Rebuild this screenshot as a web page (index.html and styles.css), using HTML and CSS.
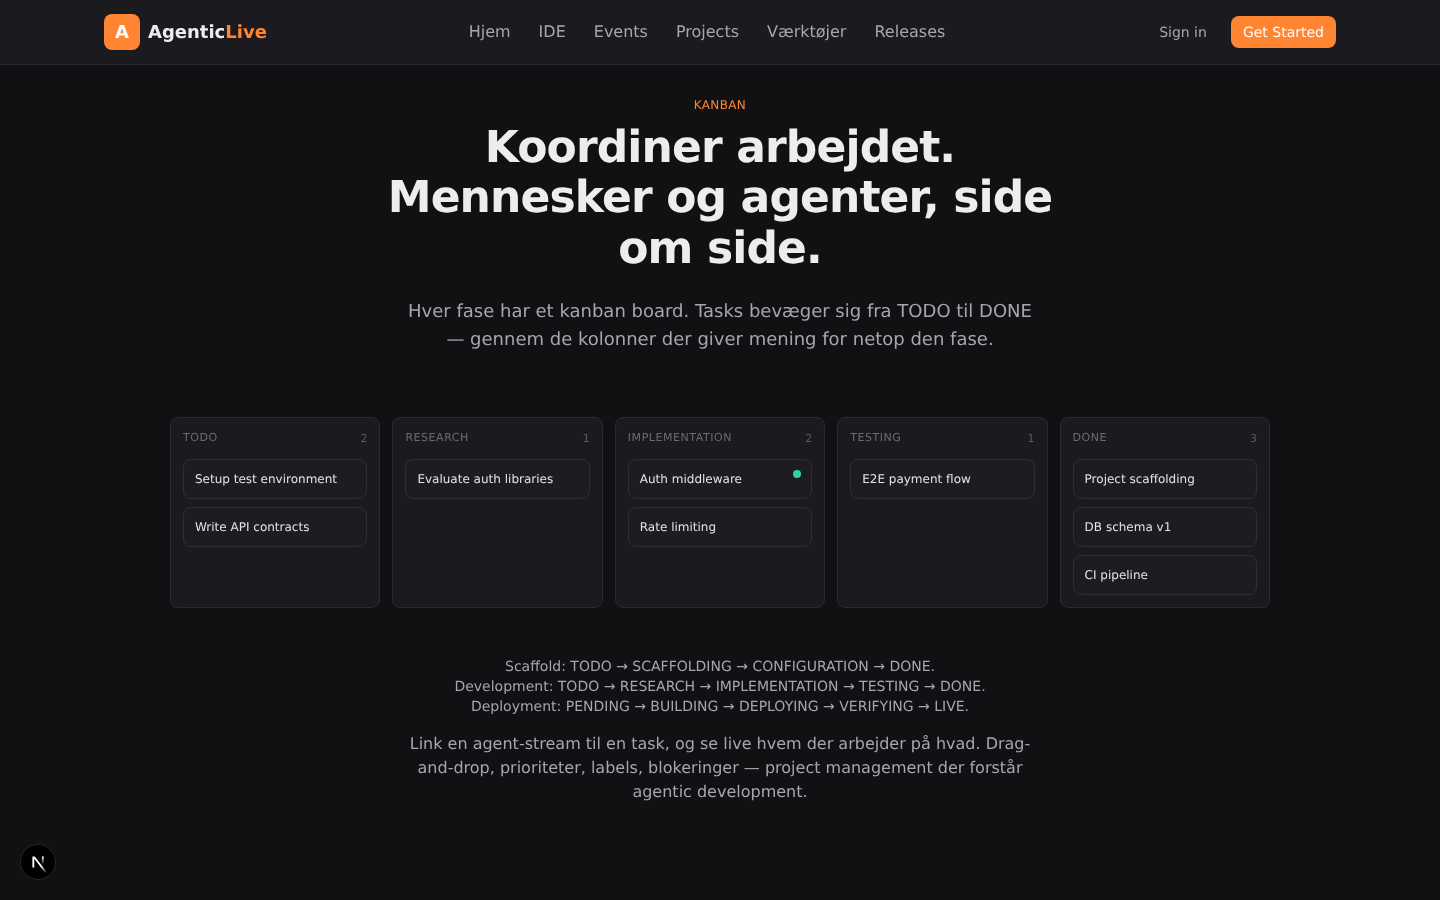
FILE: index.html
```html
<!DOCTYPE html>
<html lang="en">
<head>
    <meta charset="UTF-8">
    <meta name="viewport" content="width=device-width, initial-scale=1.0">
    <title>AgenticLive</title>
    <link rel="stylesheet" href="styles.css">
</head>
<body>
    <header class="nav">
        <div class="nav-inner">
            <a class="logo" href="#">
                <span class="logo-mark">A</span>
                <span class="logo-text">Agentic<span class="accent">Live</span></span>
            </a>
            <nav class="nav-links">
                <a href="#">Hjem</a>
                <a href="#">IDE</a>
                <a href="#">Events</a>
                <a href="#">Projects</a>
                <a href="#">Værktøjer</a>
                <a href="#">Releases</a>
            </nav>
            <div class="nav-actions">
                <a class="sign-in" href="#">Sign in</a>
                <a class="get-started" href="#">Get Started</a>
            </div>
        </div>
    </header>

    <main class="section">
        <p class="eyebrow">KANBAN</p>
        <h1>Koordiner arbejdet. Mennesker og agenter, side om side.</h1>
        <p class="lead">Hver fase har et kanban board. Tasks bevæger sig fra TODO til DONE — gennem de kolonner der giver mening for netop den fase.</p>

        <div class="board">
            <div class="column">
                <div class="column-head"><span>TODO</span><span class="count">2</span></div>
                <div class="card">Setup test environment</div>
                <div class="card">Write API contracts</div>
            </div>
            <div class="column">
                <div class="column-head"><span>RESEARCH</span><span class="count">1</span></div>
                <div class="card">Evaluate auth libraries</div>
            </div>
            <div class="column">
                <div class="column-head"><span>IMPLEMENTATION</span><span class="count">2</span></div>
                <div class="card">Auth middleware<span class="live-dot"></span></div>
                <div class="card">Rate limiting</div>
            </div>
            <div class="column">
                <div class="column-head"><span>TESTING</span><span class="count">1</span></div>
                <div class="card">E2E payment flow</div>
            </div>
            <div class="column">
                <div class="column-head"><span>DONE</span><span class="count">3</span></div>
                <div class="card">Project scaffolding</div>
                <div class="card">DB schema v1</div>
                <div class="card">CI pipeline</div>
            </div>
        </div>

        <p class="flows">Scaffold: TODO → SCAFFOLDING → CONFIGURATION → DONE.<br>Development: TODO → RESEARCH → IMPLEMENTATION → TESTING → DONE.<br>Deployment: PENDING → BUILDING → DEPLOYING → VERIFYING → LIVE.</p>
        <p class="outro">Link en agent-stream til en task, og se live hvem der arbejder på hvad. Drag-and-drop, prioriteter, labels, blokeringer — project management der forstår agentic development.</p>
    </main>

    <button class="dev-badge" type="button" aria-label="Next.js dev tools">
        <svg width="28" height="28" viewBox="0 0 180 180" fill="none">
            <defs>
                <linearGradient id="n-diag" gradientUnits="userSpaceOnUse" x1="109" y1="116.5" x2="144.5" y2="160.5">
                    <stop stop-color="#fff"/>
                    <stop offset="1" stop-color="#fff" stop-opacity="0"/>
                </linearGradient>
                <linearGradient id="n-bar" gradientUnits="userSpaceOnUse" x1="121" y1="54" x2="120.8" y2="106.9">
                    <stop stop-color="#fff"/>
                    <stop offset="1" stop-color="#fff" stop-opacity="0"/>
                </linearGradient>
            </defs>
            <path d="M149.5 157.5L69.1 54H54V126H66.1V69.4L140 164.8C143.3 162.6 146.5 160.2 149.5 157.5Z" fill="url(#n-diag)"/>
            <rect x="115" y="54" width="12" height="72" fill="url(#n-bar)"/>
        </svg>
    </button>
</body>
</html>
```

FILE: styles.css
```css
* {
    box-sizing: border-box;
}

body {
    margin: 0;
    min-height: 100vh;
    background-color: #111113;
    color: #ededef;
    font-family: "DejaVu Sans", sans-serif;
    text-rendering: geometricPrecision;
}

a {
    color: inherit;
    text-decoration: none;
}

.nav {
    height: 65px;
    background-color: #1a1a1f;
    border-bottom: 1px solid #2a2a30;
    will-change: transform;
}

.nav-inner {
    max-width: 1280px;
    height: 64px;
    margin: 0 auto;
    padding: 0 24px;
    display: flex;
    align-items: center;
    justify-content: space-between;
}

.logo {
    display: flex;
    align-items: center;
    gap: 8px;
}

.logo-mark {
    width: 36px;
    height: 36px;
    display: flex;
    align-items: center;
    justify-content: center;
    border-radius: 8px;
    background-color: #ff8533;
    color: #fff;
    font-size: 18px;
    font-weight: bold;
}

.logo-text {
    font-size: 18px;
    font-weight: bold;
}

.accent {
    color: #ff8533;
}

.nav-links {
    display: flex;
    gap: 28px;
    margin: 0 12px 2px 0;
    font-size: 16px;
    color: #a6a6ad;
}

.nav-actions {
    display: flex;
    align-items: center;
    gap: 24px;
    font-size: 14px;
}

.sign-in {
    padding-top: 1px;
    color: #a6a6ad;
}

.get-started {
    padding: 0 12px;
    height: 32px;
    line-height: 34px;
    border-radius: 8px;
    background-color: #ff8533;
    color: #fff;
}

.section {
    padding-top: 32px;
    display: flex;
    flex-direction: column;
    align-items: center;
    will-change: transform;
}

.eyebrow {
    margin: 0;
    font-size: 12px;
    line-height: 16px;
    letter-spacing: 0.36px;
    color: #ff8533;
}

h1 {
    width: 700px;
    margin: 9.5px 0 0;
    font-size: 44px;
    line-height: 50.6px;
    letter-spacing: -0.02em;
    font-weight: bold;
    text-align: center;
}

.lead {
    width: 640px;
    margin: 23.5px 0 0;
    font-size: 18px;
    line-height: 28px;
    color: #a6a6ad;
    text-align: center;
}

.board {
    width: 1100px;
    margin-top: 63px;
    display: grid;
    grid-template-columns: repeat(5, 1fr);
    gap: 12px;
}

.column {
    height: 191px;
    padding: 12px;
    display: flex;
    flex-direction: column;
    gap: 8px;
    background-color: #1a1a1f;
    border: 1px solid #2a2a30;
    border-radius: 8px;
}

.column-head {
    height: 21px;
    display: flex;
    justify-content: space-between;
    font-size: 11px;
    line-height: 16px;
    letter-spacing: 0.55px;
    color: #6b6b70;
}

.count {
    padding-top: 1px;
    font-size: 11px;
    letter-spacing: 0;
    color: #5a5a60;
}

.card {
    position: relative;
    height: 40px;
    padding: 0 11px;
    display: flex;
    align-items: center;
    font-size: 12px;
    color: #e4e4e7;
    background-color: #1c1c21;
    border: 1px solid #2e2e33;
    border-radius: 8px;
}

.live-dot {
    position: absolute;
    top: 10px;
    right: 10px;
    width: 8px;
    height: 8px;
    border-radius: 50%;
    background-color: #2dd4a0;
}

.flows {
    margin: 49px 0 0;
    font-size: 14px;
    line-height: 20px;
    color: #a6a6ad;
    text-align: center;
}

.outro {
    width: 640px;
    margin: 15px 0 0;
    font-size: 16px;
    line-height: 24px;
    color: #a6a6ad;
    text-align: center;
}

.dev-badge {
    position: fixed;
    left: 20px;
    bottom: 20px;
    width: 36px;
    height: 36px;
    padding: 0;
    display: flex;
    align-items: center;
    justify-content: center;
    background-color: #000;
    border: 1px solid #262626;
    border-radius: 50%;
}
```
